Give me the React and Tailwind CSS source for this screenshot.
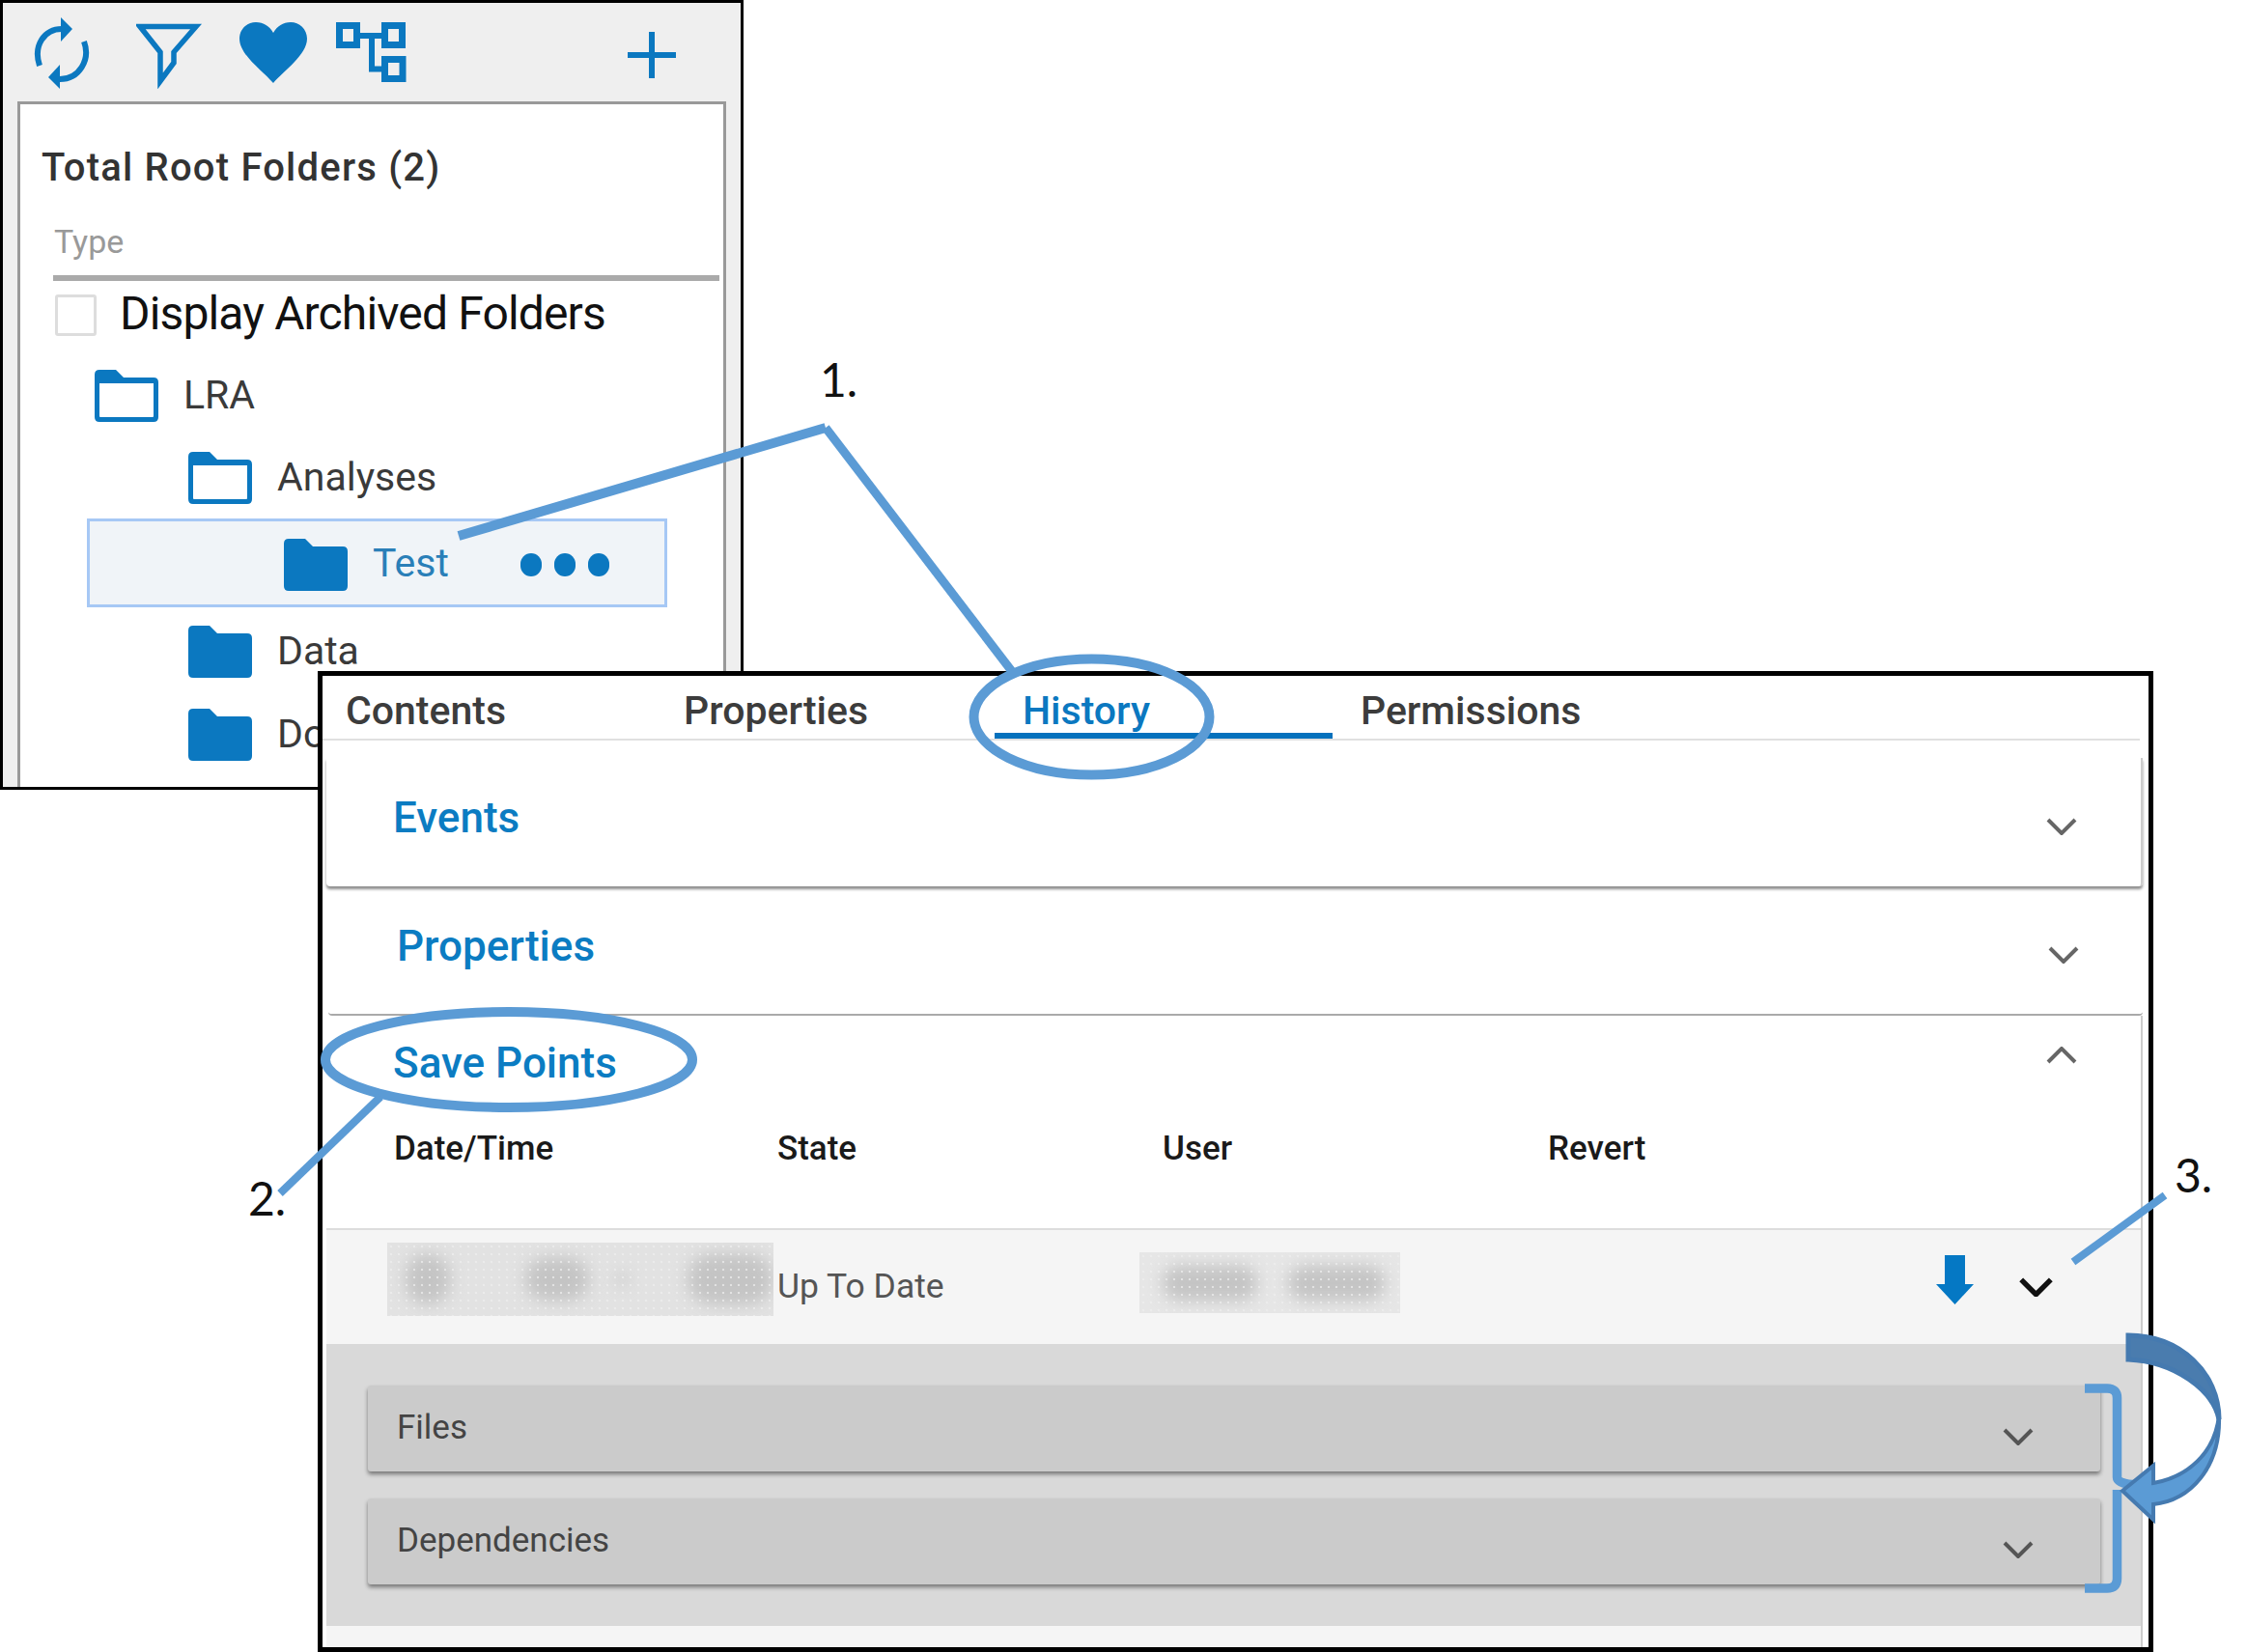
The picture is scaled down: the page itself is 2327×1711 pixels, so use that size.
import React from 'react';

const BLUE = '#0b78c0';

function Folder({ filled, className }) {
  const outer = 'M1 6 Q1 1 6 1 H23 L31 9 H62 Q67 9 67 14 V50 Q67 55 62 55 H6 Q1 55 1 50 Z';
  const hole = ' M6 15 V49 Q6 50 7 50 H61 Q62 50 62 49 V15 Z';
  return (
    <svg viewBox="0 0 68 56" className={`w-[68px] h-[56px] shrink-0 ${className || ''}`}>
      <path d={filled ? outer : outer + hole} fill={BLUE} fillRule="evenodd" />
    </svg>
  );
}

function Chevron({ up, color = '#666', width = 32, height = 18, stroke = 4, className = '' }) {
  return (
    <svg viewBox="0 0 32 18" width={width} height={height} className={`shrink-0 ${className}`}>
      <path
        d={up ? 'M2 16 L16 2 L30 16' : 'M2 2 L16 16 L30 2'}
        fill="none"
        stroke={color}
        strokeWidth={stroke}
      />
    </svg>
  );
}

// redacted values in the screenshot: soft grey smudges with a dither on top
function Blurred({ className, blobs }) {
  return (
    <div className={`relative overflow-hidden flex items-center shrink-0 ${className}`}>
      {blobs.map((b, i) => (
        <div key={i} className={`rounded-full shrink-0 bg-[#c4c4c4] blur-[8px] ${b}`} />
      ))}
      <div className="absolute inset-0 bg-[radial-gradient(circle,#efefef_1px,transparent_1.6px)] bg-[length:8px_8px] opacity-70" />
    </div>
  );
}

function Toolbar() {
  return (
    <div className="h-[102px] flex items-start">
      {/* refresh */}
      <svg viewBox="0 0 60 76" className="w-[60px] h-[76px] ml-[31px] mt-[14px]" fill="none" stroke={BLUE} strokeWidth="6">
        <path d="M30 13 C12 13 0 30 7 51" />
        <path d="M53 26 C60 45 48 65 28 65" />
        <path d="M29 1 L41 13 L29 26 Z" fill={BLUE} stroke="none" />
        <path d="M16 63 L28 50 L28 75 Z" fill={BLUE} stroke="none" />
      </svg>
      {/* filter */}
      <svg viewBox="0 0 68 68" className="w-[68px] h-[68px] ml-[47px] mt-[21px]" fill="none" stroke={BLUE} strokeWidth="5.5">
        <path d="M4 3.5 H62 L39 30 V41 L25 60 V30 Z" />
      </svg>
      {/* heart */}
      <svg viewBox="0 0 70 64" className="w-[70px] h-[64px] ml-[39px] mt-[20px]">
        <path d="M35 63 C24 50 0 34 0 17 C0 7 8 0 17 0 C25 0 31 4 35 11 C39 4 45 0 53 0 C62 0 70 7 70 17 C70 34 46 50 35 63 Z" fill={BLUE} />
      </svg>
      {/* hierarchy */}
      <svg viewBox="0 0 74 66" className="w-[74px] h-[66px] ml-[29px] mt-[18px]" fill="none" stroke={BLUE} strokeWidth="7">
        <rect x="4.5" y="5.5" width="18" height="20" />
        <rect x="51.5" y="5.5" width="18" height="20" />
        <rect x="51.5" y="40.5" width="18.5" height="20" />
        <path d="M26 16 H48 M38 16 V50.5 H48" strokeWidth="6" />
      </svg>
      {/* add */}
      <svg viewBox="0 0 50 50" className="w-[50px] h-[50px] ml-[229px] mt-[29px]" fill="none" stroke={BLUE} strokeWidth="6">
        <path d="M0 25 H50 M25 1 V49" />
      </svg>
    </div>
  );
}

function TreeRow({ height, indent, label, filled }) {
  return (
    <div className={`flex items-center ${height} ${indent}`}>
      <Folder filled={filled} />
      <span className="ml-[25px] text-[41px] text-[#3a3a3a] whitespace-nowrap">{label}</span>
    </div>
  );
}

function LeftWindow() {
  return (
    <div className="w-[770px] h-[818px] border-[3px] border-black bg-[#efefef] flex flex-col">
      <Toolbar />
      <div className="ml-[15px] w-[734px] flex-1 bg-white border-t-[3px] border-x-[3px] border-[#999] overflow-hidden">
        <div className="mt-[44px] ml-[22px] h-[44px] flex items-center text-[40px] font-medium text-[#333] tracking-[1.2px] whitespace-nowrap">
          Total Root Folders (2)
        </div>
        <div className="mt-[32px] ml-[35px] h-[44px] flex items-center text-[34px] text-[#999]">Type</div>
        <div className="mt-[13px] ml-[34px] w-[690px] h-[6px] bg-[#aaa]" />
        <div className="h-[70px] ml-[36px] flex items-center">
          <div className="w-[43px] h-[43px] border-[3px] border-[#ddd] rounded-[3px] shrink-0" />
          <span className="ml-[24px] -mt-[3px] text-[48px] text-[#111] whitespace-nowrap tracking-[-0.85px]">Display Archived Folders</span>
        </div>
        <div className="mt-[6px]" />
        <TreeRow height="h-[86px]" indent="pl-[76px]" label="LRA" />
        <TreeRow height="h-[84px]" indent="pl-[173px]" label="Analyses" />
        <div className="ml-[69px] w-[601px] h-[92px] border-[3px] border-[#a6c8f5] bg-[#f0f4f8] flex items-center pl-[200px] pr-[57px]">
          <Folder filled className="mt-[3px]" />
          <span className="ml-[25px] mt-[2px] text-[41px] text-[#2a7fb8]">Test</span>
          <div className="ml-auto mt-[3px] flex gap-[13px]">
            <div className="w-[22px] h-[24px] rounded-full bg-[#0b78c0]" />
            <div className="w-[22px] h-[24px] rounded-full bg-[#0b78c0]" />
            <div className="w-[22px] h-[24px] rounded-full bg-[#0b78c0]" />
          </div>
        </div>
        <TreeRow height="h-[92px]" indent="pl-[173px]" label="Data" filled />
        <TreeRow height="h-[79px]" indent="pl-[173px]" label="Do" filled />
      </div>
    </div>
  );
}

function Tabs() {
  const tabs = ['Contents', 'Properties', 'History', 'Permissions'];
  return (
    <div className="flex h-[67px] border-b-2 border-[#e0e0e0] mr-[9px]">
      {tabs.map((t) => (
        <div
          key={t}
          className={
            t === 'History'
              ? 'w-[350px] pl-[29px] h-[65px] pt-[14px] flex items-center text-[41px] font-medium text-[#0b78c0] border-b-[6px] border-[#0571bd]'
              : 'w-[350px] pl-[28px] h-[65px] pt-[8px] first:-ml-[4px] last:pl-[29px] flex items-center text-[41px] font-medium text-[#3c3c3c]'
          }
        >
          {t}
        </div>
      ))}
    </div>
  );
}

function SavePoints() {
  return (
    <div className="ml-[4px] w-[1881px] flex-1 border-r-2 border-[#ccc] flex flex-col">
      <div className="h-[96px] flex items-center justify-between pl-[69px] pr-[66px]">
        <span className="text-[44px] font-medium text-[#0b7cc2] mt-[1px]">Save Points</span>
        <Chevron up className="-mt-[15px]" />
      </div>
      <div className="h-[124px] pt-[16px] pl-[70px] grid grid-cols-[397px_399px_399px_1fr] text-[35px] font-medium text-[#1a1a1a]">
        <span>Date/Time</span>
        <span>State</span>
        <span>User</span>
        <span>Revert</span>
      </div>
      <div className="h-[120px] border-t-2 border-[#ddd] bg-[#f5f5f5] flex items-center pl-[63px] pr-[91px]">
        <Blurred
          className="w-[400px] h-[76px] -mt-[16px] bg-[#e2e2e2] pl-[19px]"
          blobs={[
            'w-[46px] h-[52px]',
            'w-[66px] h-[44px] ml-[78px]',
            'w-[12px] h-[12px] ml-[28px]',
            'w-[88px] h-[52px] ml-[62px]',
          ]}
        />
        <span className="ml-[4px] w-[375px] text-[35.5px] text-[#555] shrink-0">Up To Date</span>
        <Blurred
          className="w-[270px] h-[63px] -mt-[9px] bg-[#e6e6e6] pl-[24px]"
          blobs={['w-[98px] h-[36px]', 'w-[100px] h-[36px] ml-[32px]']}
        />
        <svg viewBox="0 0 39 51" className="w-[39px] h-[51px] ml-auto -mt-[16px]">
          <path d="M9 0 H30 V30 H39 L19.5 51 L0 30 H9 Z" fill="#0578c4" />
        </svg>
        <Chevron color="#111" width={35} height={20} stroke={5} className="ml-[47px]" />
      </div>
      <div className="h-[292px] bg-[#d9d9d9] pl-[43px] pr-[42px] pt-[43px] flex flex-col gap-[28px]">
        {['Files', 'Dependencies'].map((t) => (
          <div
            key={t}
            className="h-[89px] bg-[#cbcbcb] rounded-[3px] shadow-[0_3px_4px_rgba(0,0,0,0.45)] flex items-center justify-between pl-[30px] pr-[69px]"
          >
            <span className="text-[35px] text-[#444] -mt-[1px]">{t}</span>
            <Chevron color="#555" className="mt-[16px]" />
          </div>
        ))}
      </div>
      <div className="flex-1 bg-[#f5f5f5]" />
    </div>
  );
}

function DetailPanel() {
  return (
    <div className="relative ml-[329px] -mt-[123px] w-[1901px] h-[1016px] border-[5px] border-black bg-white flex flex-col">
      <Tabs />
      <div className="mt-[18px] ml-[4px] w-[1881px] h-[133px] border-r-2 border-[#ccc] rounded-b-[4px] shadow-[0_3px_3px_rgba(0,0,0,0.45)] flex items-center justify-between pl-[69px] pr-[66px]">
        <span className="text-[44px] font-medium text-[#0b7cc2] -mt-[10px]">Events</span>
        <Chevron className="mt-[9px]" />
      </div>
      <div className="ml-[6px] w-[1879px] h-[134px] border-b-2 border-[#aaa] flex items-center justify-between pl-[71px] pr-[66px] rounded-b-[4px]">
        <span className="text-[44px] font-medium text-[#0b7cc2] -mt-[9px]">Properties</span>
        <Chevron className="mt-[10px]" />
      </div>
      <SavePoints />
    </div>
  );
}

function Annotations() {
  return (
    <>
      <svg viewBox="0 0 2327 1711" className="absolute inset-0 w-[2327px] h-[1711px] pointer-events-none" fill="none">
        <g stroke="#5b9bd5">
          <path d="M475 555 L855 443" strokeWidth="10" />
          <path d="M855 443 L1050 698" strokeWidth="9" />
          <ellipse cx="1130.5" cy="742.5" rx="122" ry="60" strokeWidth="10" />
          <ellipse cx="527" cy="1097.5" rx="190" ry="49.5" strokeWidth="10" />
          <path d="M394 1136 L290 1236" strokeWidth="8" />
          <path d="M2242 1238 L2147 1307" strokeWidth="8" />
          <path
            d="M2159 1438 H2182 Q2192.5 1438 2192.5 1448 V1530 Q2192.5 1537 2213 1538 M2192.5 1543 V1635 Q2192.5 1645 2182 1645 H2159"
            strokeWidth="9.5"
          />
        </g>
        {/* curved arrow */}
        <path
          d="M2204 1383 C2258 1383 2298 1422 2298 1470 C2292 1440 2252 1410 2204 1408 Z"
          fill="#4a7cae"
          stroke="#457ab0"
          strokeWidth="5"
        />
        <path
          d="M2298 1466 C2300 1520 2268 1554 2230 1558 V1574 L2198 1544 L2230 1518 V1536 C2265 1530 2294 1505 2298 1466 Z"
          fill="#5b9bd5"
          stroke="#457ab0"
          strokeWidth="4"
        />
      </svg>
      <span className="absolute left-[849px] top-[364px] text-[48px] leading-[58px] text-[#111] font-[Lato,sans-serif]">1.</span>
      <span className="absolute left-[257px] top-[1212px] text-[48px] leading-[58px] text-[#111] font-[Lato,sans-serif]">2.</span>
      <span className="absolute left-[2252px] top-[1188px] text-[48px] leading-[58px] text-[#111] font-[Lato,sans-serif]">3.</span>
    </>
  );
}

export default function App() {
  return (
    <div className="relative w-[2327px] h-[1711px] overflow-hidden bg-white [font-family:Roboto,sans-serif]">
      <LeftWindow />
      <DetailPanel />
      <Annotations />
    </div>
  );
}
